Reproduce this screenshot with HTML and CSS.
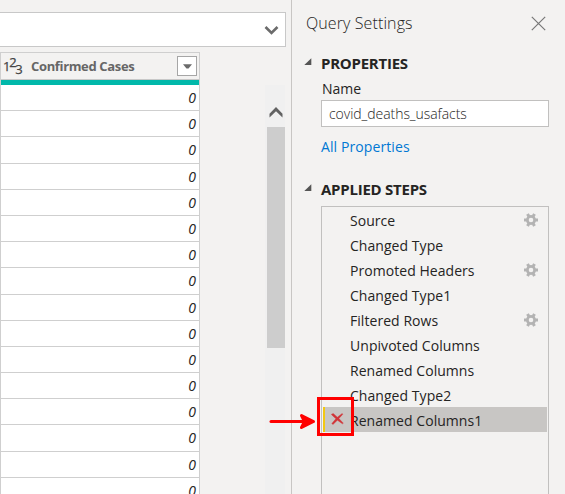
FILE: index.html
```html
<!DOCTYPE html>
<html lang="en">
<head>
<meta charset="utf-8">
<title>Query Settings</title>
<link rel="stylesheet" href="styles.css">
</head>
<body>
<div class="app">
  <main class="data-pane">
    <div class="formula-bar">
      <svg width="15" height="11" viewBox="0 0 15 11"><path d="M1.5 2 7.5 8 13.5 2" fill="none" stroke="#6b6b6b" stroke-width="2.6"/></svg>
    </div>
    <div class="grid-area">
      <section class="table">
        <header class="column-header">
          <span class="type-icon"><span>1</span><span class="two">2</span><span class="three">3</span></span>
          <span class="column-name">Confirmed Cases</span>
          <button class="filter" aria-label="Filter"><svg width="9" height="5" viewBox="0 0 9 5"><path d="M0 .3H9L5.5 4.5H3.5Z" fill="#6b6b6b"/></svg></button>
        </header>
        <div class="quality-bar"></div>
        <div class="cell">0</div><div class="cell">0</div><div class="cell">0</div><div class="cell">0</div>
        <div class="cell">0</div><div class="cell">0</div><div class="cell">0</div><div class="cell">0</div>
        <div class="cell">0</div><div class="cell">0</div><div class="cell">0</div><div class="cell">0</div>
        <div class="cell">0</div><div class="cell">0</div><div class="cell">0</div><div class="cell">0</div>
      </section>
      <div class="scrollbar">
        <svg width="16" height="12" viewBox="0 0 16 12"><path d="M1.5 11.5V7.7L8 1.1 14.5 7.7V11.5L8 5.3Z" fill="#626262"/></svg>
        <div class="thumb"></div>
      </div>
    </div>
  </main>
  <aside class="settings">
    <div class="title-row">
      <h1>Query Settings</h1>
      <svg width="15" height="15" viewBox="0 0 15 15"><path d="M.8.8 14.2 14.2M14.2.8.8 14.2" stroke="#777" stroke-width="1.2"/></svg>
    </div>
    <div class="section-head properties-head">
      <svg width="8" height="8" viewBox="0 0 8 8"><path d="M7.3.3V7H.3Z" fill="#555"/></svg>
      <h2 class="properties-title">PROPERTIES</h2>
    </div>
    <label class="name-label" for="name">Name</label>
    <div class="name-field" id="name"><span>covid_deaths_usafacts</span></div>
    <a class="all-link">All Properties</a>
    <div class="section-head steps-head">
      <svg width="8" height="8" viewBox="0 0 8 8"><path d="M7.3.3V7H.3Z" fill="#555"/></svg>
      <h2 class="steps-title">APPLIED STEPS</h2>
    </div>
    <svg width="0" height="0" class="defs"><symbol id="gear" viewBox="0 0 14 14"><g stroke="#b3b3b3" fill="none"><circle cx="7" cy="7" r="3.7" stroke-width="2.8"/><path d="M0 7H2.5M11.5 7H14M3.5.9 4.8 3.2M9.2 10.8 10.5 13.1M10.5.9 9.2 3.2M4.8 10.8 3.5 13.1" stroke-width="3"/></g></symbol></svg>
    <div class="steps">
      <div class="step"><span>Source</span><svg class="gear"><use href="#gear"/></svg></div>
      <div class="step"><span>Changed Type</span></div>
      <div class="step"><span>Promoted Headers</span><svg class="gear"><use href="#gear"/></svg></div>
      <div class="step"><span>Changed Type1</span></div>
      <div class="step"><span>Filtered Rows</span><svg class="gear"><use href="#gear"/></svg></div>
      <div class="step"><span>Unpivoted Columns</span></div>
      <div class="step"><span>Renamed Columns</span></div>
      <div class="step"><span>Changed Type2</span></div>
      <div class="step selected"><svg class="delete" width="13" height="12" viewBox="0 0 13 12"><path d="M.3 1.4 2.2.4 6.4 4.2 11.2.5 11.8 1.2 7.9 5.5 12.3 10.2 11.4 10.8 6.4 7.2 2 11.5.8 10.6 4.9 5.8Z" fill="#d13438" stroke="#d13438" stroke-width=".4"/></svg><span>Renamed Columns1</span></div>
    </div>
  </aside>
  <svg class="callout" width="86" height="42" viewBox="0 0 86 42"><path d="M2 25.5H42" stroke="red" stroke-width="3" stroke-linecap="round"/><path d="M32.5 19.5 44.5 25.5 32.5 31.5 35.5 25.5Z" fill="red" stroke="red" stroke-width="3" stroke-linejoin="round"/><rect x="49.5" y="2.5" width="34" height="36" fill="none" stroke="red" stroke-width="3"/></svg>
</div>
</body>
</html>
```

FILE: styles.css
```css
* { box-sizing: border-box; }
body { margin: 0; font-family: "Open Sans", "Noto Sans", sans-serif; color: #252423; background: #f3f2f1; }
svg { display: block; flex: none; }
.app { position: relative; display: flex; width: 565px; height: 494px; overflow: hidden; }
.data-pane { width: 291px; height: 494px; padding-top: 12px; overflow: hidden; }
.formula-bar { display: flex; align-items: center; justify-content: flex-end; width: 286px; height: 35px; padding: 1px 6px 0 0; background: #fff; border: 1px solid #c8c8c8; border-left: 0; }
.grid-area { display: flex; align-items: flex-start; padding-top: 5px; }
.table { width: 200px; border: 1px solid #cfcfcf; flex: none; }
.column-header { display: flex; align-items: center; height: 27px; padding: 0 2px 0 3px; border-bottom: 1px solid #c8c8c8; }
.type-icon { display: flex; width: 27px; height: 20px; margin-left: -1px; font-size: 13px; line-height: 20px; color: #444; letter-spacing: -1.3px; -webkit-text-stroke: .25px #444; }
.two { margin-top: -4px; }
.three { margin-top: 3px; }
.column-name { padding-left: 1px; font-size: 13px; font-weight: 700; color: #666; flex: 1; letter-spacing: -0.35px; }
.filter { display: flex; align-items: center; justify-content: center; width: 20px; height: 20px; padding: 0; background: #fff; border: 1px solid #a6a6a6; }
.quality-bar { height: 5px; background: #01b8aa; }
.cell { height: 26.2px; padding-right: 3px; font-size: 14px; font-style: italic; line-height: 25px; text-align: right; background: #fff; border-bottom: 1px solid #cfcfcf; }
.scrollbar { width: 20px; height: 420px; margin: 33px 0 0 65px; padding: 21px 0 0 2px; background: #f0f0f0; }
.scrollbar svg { margin-left: 1px; }
.thumb { width: 18px; height: 221px; margin-top: 9px; background: #cdcdcd; }
.settings { width: 274px; border-left: 1px solid #c8c6c4; padding: 11px 16px 0 14px; }
.title-row { display: flex; align-items: center; justify-content: space-between; height: 24px; padding-right: 3px; }
h1, h2 { margin: 0; white-space: nowrap; }
h1 { font-size: 16px; font-weight: 300; letter-spacing: 0.1px; }
.section-head { display: flex; align-items: center; gap: 8px; height: 20px; }
.section-head svg { margin: -3px 1px 0 -2px; }
.properties-head { margin-top: 18px; }
h2 { font-size: 15px; font-weight: 700; }
.properties-title { letter-spacing: -0.25px; }
.steps-title { letter-spacing: -0.25px; }
.name-label { display: block; margin: 6px 0 0 16px; font-size: 14px; line-height: 20px; }
.name-field { display: flex; align-items: center; height: 27px; margin: 1px 0 0 15px; width: 228px; padding: 0 0 0 7px; background: #fff; border: 1px solid #c1c0bf; font-size: 14px; font-weight: 300; letter-spacing: -0.05px; }
.all-link { display: block; margin: 9px 0 0 15px; font-size: 14px; line-height: 21px; letter-spacing: 0.1px; color: #0078d4; }
.steps-head { margin-top: 22px; }
.defs { position: absolute; }
.steps { width: 228px; height: 300px; margin: 7px 0 0 15px; padding: 0 1px; border: 1px solid #c1c0bf; }
.step { display: flex; align-items: center; height: 25px; padding: 0 9px 0 27px; font-size: 14px; letter-spacing: 0.05px; white-space: nowrap; }
.step span { padding-top: 2px; }
.gear { width: 14px; height: 14px; margin-left: auto; }
.selected { background: #c8c6c4; border-left: 2px solid #f2c811; padding-left: 6px; }
.delete { margin: -2px 6px 0 0; }
.callout { position: absolute; left: 269px; top: 396px; }
```
